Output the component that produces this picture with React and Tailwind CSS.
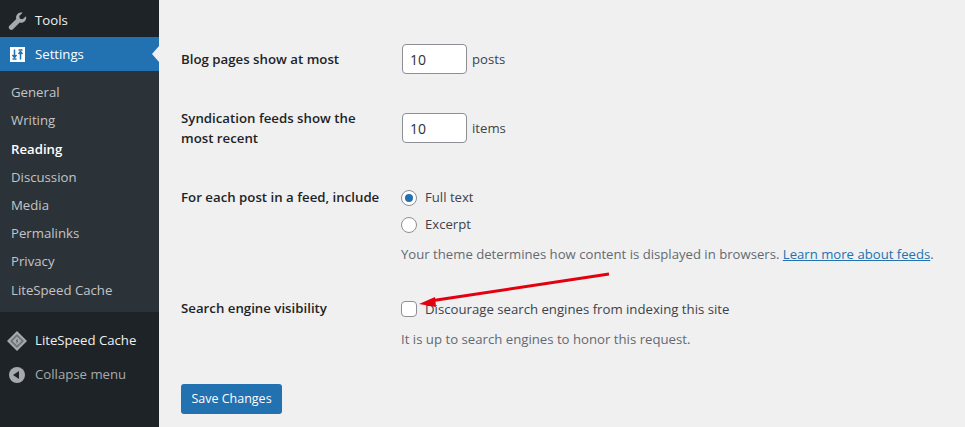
const font = { fontFamily: '"Open Sans", sans-serif' };

const subItems = ["General", "Writing", "Reading", "Discussion", "Media", "Permalinks", "Privacy", "LiteSpeed Cache"];

function Sidebar() {
    return (
        <div className="w-[159px] shrink-0 bg-[#1d2327] text-[13.2px] text-[#f0f0f1] relative">
            <div className="h-[37px] pt-[5px] flex items-center pl-[8px] gap-[8px]">
                <svg width="19" height="19" viewBox="0 0 19 19" fill="#a7aaad">
                    <path d="M18 4.2c.5 1.9 0 3.8-1.3 5.1-1.400 1.400-3.300 1.800-5 1.200L5 17.300c-.9.900-2.300.900-3.200 0l-.4-.4c-.9-.9-.9-2.300 0-3.200l6.900-6.700c-.6-1.700-.2-3.600 1.200-5C10.800.7 12.800.2 14.600.8l-3.300 3.200.5 2.700 2.800.6z" />
                </svg>
                <span>Tools</span>
            </div>
            <div className="h-[34px] flex items-center pl-[10px] gap-[10px] bg-[#2271b1] text-white relative">
                <svg width="15" height="15" viewBox="0 0 15 15">
                    <rect width="15" height="15" fill="#fff" />
                    <path d="M4.500 2.500v7M2.500 8l2 2.500 2-2.500M10.500 12.500v-7M8.500 7l2-2.500 2 2.500" fill="none" stroke="#2271b1" strokeWidth="1.500" />
                    <path d="M2.500 12h4M8.500 3h4" stroke="#2271b1" strokeWidth="1.500" />
                </svg>
                <span className="mt-[1px]">Settings</span>
                <span className="absolute right-0 top-[9px] border-y-[8px] border-y-transparent border-r-[7px] border-r-[#f0f0f1]" />
            </div>
            <ul className="bg-[#2c3338] pt-[8px] h-[241px]">
                {subItems.map((item) => (
                    <li key={item} className={`h-[28.2px] flex items-center pl-[11px] ${item === "Reading" ? "font-semibold text-white" : "text-[#c3c4c7]"}`}>
                        {item}
                    </li>
                ))}
            </ul>
            <div className="h-[12px]" />
            <div className="h-[34px] flex items-center pl-[7px] gap-[8px] text-[#f0f0f1]">
                <svg width="20" height="20" viewBox="0 0 20 20">
                    <path d="M10 0l10 10-10 10L0 10z" fill="#a7aaad" />
                    <path d="M10 3l7 7-7 7-7-7z" fill="#6f7478" />
                    <path d="M10 5.500l4.500 4.500-4.500 4.500L5.500 10z" fill="#a7aaad" />
                    <path d="M10.800 7l-2 3.300h1.200L9.200 13l2-3.300H10z" fill="#3c434a" />
                </svg>
                <span>LiteSpeed Cache</span>
            </div>
            <div className="h-[34px] flex items-center pl-[9px] gap-[10px] text-[#a7aaad]">
                <span className="w-[16px] h-[16px] rounded-full bg-[#a7aaad] flex items-center justify-center">
                    <span className="mr-[2px] border-y-[4px] border-y-transparent border-r-[6px] border-r-[#1d2327]" />
                </span>
                <span>Collapse menu</span>
            </div>
        </div>
    );
}

function NumberBox({ value, unit }) {
    return (
        <div className="flex items-center gap-[5px] ml-[1px]">
            <div className="w-[65px] h-[30px] border border-[#8c8f94] rounded bg-white flex items-center pl-[7px] text-[14px] text-[#2c3338]">{value}</div>
            <span className="mt-[1px]">{unit}</span>
        </div>
    );
}

function Radio({ label, checked }) {
    return (
        <div className="flex items-center gap-[8px] h-[27px]">
            <span className="w-[16px] h-[16px] rounded-full border border-[#8c8f94] bg-white flex items-center justify-center">
                {checked && <span className="w-[8px] h-[8px] rounded-full bg-[#2271b1]" />}
            </span>
            <span>{label}</span>
        </div>
    );
}

const labelClass = "w-[220px] shrink-0 font-semibold text-[13.25px] text-[#1d2327] leading-[20px]";

export default function App() {
    return (
        <div style={font} className="w-[965px] h-[427px] flex overflow-hidden bg-[#f0f0f1] text-[13.15px] text-[#3c434a]">
            <Sidebar />
            <div className="flex-1 pl-[22px] relative">
                <div className="flex items-center pt-[44px] h-[74px]">
                    <div className={labelClass}>Blog pages show at most</div>
                    <NumberBox value="10" unit="posts" />
                </div>
                <div className="flex items-center pt-[39px] h-[69px]">
                    <div className={labelClass}>Syndication feeds show the<br />most recent</div>
                    <NumberBox value="10" unit="items" />
                </div>
                <div className="flex pt-[41px]">
                    <div className={`${labelClass} pt-[3px]`}>For each post in a feed, include</div>
                    <div>
                        <Radio label="Full text" checked />
                        <Radio label="Excerpt" />
                        <p className="mt-[6px] text-[#646970] leading-[20px]">
                            Your theme determines how content is displayed in browsers. <span className="text-[#2271b1] underline">Learn more about feeds</span>.
                        </p>
                    </div>
                </div>
                <div className="flex pt-[35px]">
                    <div className={`${labelClass} -mt-[1px]`}>Search engine visibility</div>
                    <div>
                        <div className="flex items-center gap-[8px] h-[20px]">
                            <span className="w-[16px] h-[16px] border border-[#8c8f94] rounded bg-white" />
                            <span className="mt-[1px] text-[13.2px]">Discourage search engines from indexing this site</span>
                        </div>
                        <p className="mt-[10px] text-[13.2px] text-[#646970] leading-[20px]">It is up to search engines to honor this request.</p>
                    </div>
                </div>
                <div className="mt-[35px] w-[101px] h-[30px] pt-[1px] bg-[#2271b1] rounded-[3px] text-[12.5px] text-white flex items-center justify-center">Save Changes</div>
                <svg className="absolute left-[255px] top-[265px]" width="205" height="45" viewBox="0 0 205 45">
                    <line x1="195" y1="9" x2="16" y2="36" stroke="#e3000f" strokeWidth="3" />
                    <path d="M5 39l16-7 1 10z" fill="#e3000f" />
                </svg>
            </div>
        </div>
    );
}
